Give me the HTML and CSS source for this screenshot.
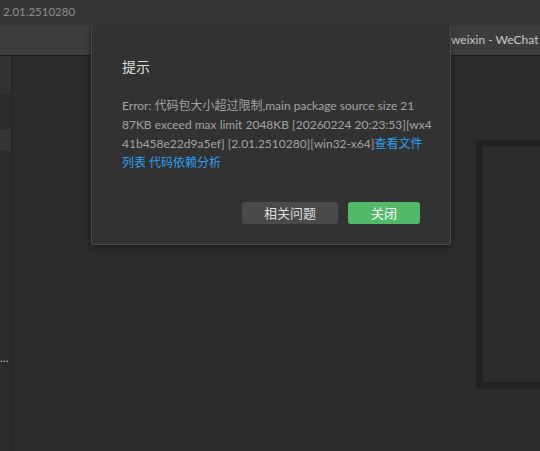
FILE: index.html
```html
<!DOCTYPE html>
<html>
<head>
<meta charset="utf-8">
<link rel="stylesheet" href="styles.css">
</head>
<body>
<div class="app">
  <div class="titlebar">2.01.2510280</div>
  <div class="tabs">
    <div class="tab tab-left"></div>
    <div class="tab-gap"></div>
    <div class="tab tab-right">weixin - WeChat Devtools</div>
  </div>
  <div class="workspace">
    <div class="sidebar">
      <div class="side-block side-block-a"></div>
      <div class="side-block side-block-b"></div>
      <div class="side-dots">...</div>
    </div>
    <div class="main">
      <div class="frame"></div>
    </div>
  </div>

  <div class="dialog">
    <div class="dialog-title">提示</div>
    <div class="dialog-body">
      <div class="line">Error: 代码包大小超过限制,main package source size 21</div>
      <div class="line">87KB exceed max limit 2048KB [20260224 20:23:53][wx4</div>
      <div class="line">41b458e22d9a5ef] [2.01.2510280][win32-x64]<a class="link">查看文件</a></div>
      <div class="line"><a class="link">列表</a> <a class="link">代码依赖分析</a></div>
    </div>
    <div class="dialog-actions">
      <button class="btn btn-default">相关问题</button>
      <button class="btn btn-primary">关闭</button>
    </div>
  </div>
</div>
</body>
</html>
```

FILE: styles.css
```css
html, body {
  margin: 0;
  padding: 0;
}
body {
  width: 540px;
  height: 451px;
  overflow: hidden;
  background: #2b2b2b;
  font-family: "Lato", "Noto Sans CJK SC", sans-serif;
}
.app {
  position: relative;
  width: 540px;
  height: 451px;
  display: flex;
  flex-direction: column;
  overflow: hidden;
}
.titlebar {
  height: 26px;
  box-sizing: border-box;
  padding-left: 3px;
  background: #363636;
  color: #8c8c8c;
  font-size: 11.5px;
  line-height: 24px;
}
.tabs {
  height: 30px;
  box-sizing: border-box;
  display: flex;
  background: #313131;
  border-bottom: 1px solid #1c1c1c;
}
.tab-left {
  width: 90px;
  background: #3d3d3d;
}
.tab-gap {
  flex: 1;
}
.tab-right {
  flex: 0 0 120px;
  margin-right: -31px;
  background: #3d3d3d;
  color: #c8c8c8;
  font-size: 12px;
  line-height: 28px;
  white-space: nowrap;
  overflow: hidden;
}
.workspace {
  flex: 1;
  display: flex;
}
.sidebar {
  width: 11px;
  border-right: 1px solid #232323;
  display: flex;
  flex-direction: column;
  overflow: hidden;
}
.side-block {
  background: #323232;
}
.side-block-a {
  height: 38px;
}
.side-block-b {
  height: 22px;
  margin-top: 35px;
  background: #353535;
}
.side-dots {
  margin-top: 201px;
  color: #b8b8b8;
  font-size: 12px;
  line-height: 12px;
  white-space: nowrap;
}
.main {
  flex: 1;
  padding: 84px 0 0 464px;
  overflow: hidden;
}
.frame {
  width: 80px;
  height: 249px;
  box-sizing: border-box;
  border: 7px solid #212121;
}
.dialog {
  position: absolute;
  left: 91px;
  top: 26px;
  width: 360px;
  height: 219px;
  box-sizing: border-box;
  background: #323232;
  border: 1px solid #4b4b4b;
  border-top: none;
  border-radius: 0 0 3px 3px;
  box-shadow: 0 2px 6px rgba(0, 0, 0, 0.35);
  padding: 28px 30px 0 30px;
}
.dialog-title {
  color: #dcdcdc;
  font-family: "Noto Sans CJK SC", sans-serif;
  font-size: 14px;
  line-height: 24px;
}
.dialog-body {
  margin-top: 18px;
  color: #a3a3a3;
  font-size: 12px;
  line-height: 19px;
}
.line {
  white-space: nowrap;
  height: 19px;
}
.link {
  color: #2d9ef0;
}
.dialog-actions {
  display: flex;
  justify-content: flex-end;
  gap: 10px;
  margin-top: 30px;
}
.btn {
  height: 22px;
  border: none;
  border-radius: 3px;
  font-family: "Noto Sans CJK SC", sans-serif;
  font-size: 13px;
  line-height: 22px;
  padding: 0;
}
.btn-default {
  width: 96px;
  background: #4a4a4a;
  color: #dedede;
}
.btn-primary {
  width: 72px;
  background: #52b96b;
  color: #ffffff;
}
```
